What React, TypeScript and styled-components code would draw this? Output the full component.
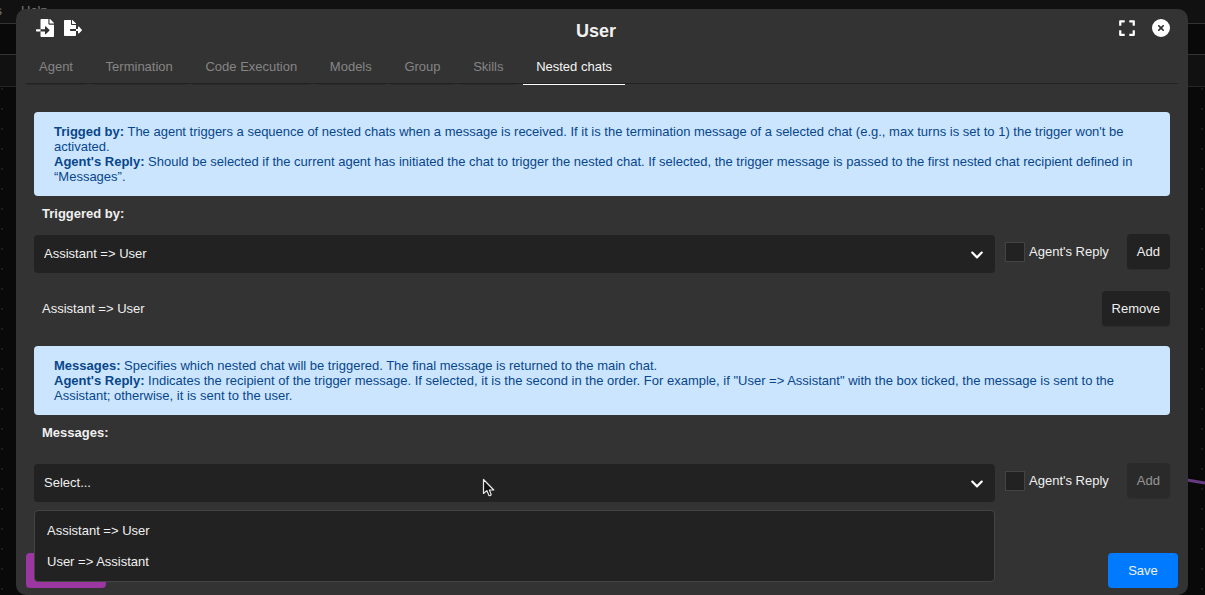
import React, { Fragment, useState } from "react";
import styled, { createGlobalStyle } from "styled-components";
import { FaChevronDown, FaExpand, FaFileExport, FaFileImport } from "react-icons/fa";
import { FaCircleXmark } from "react-icons/fa6";

const GlobalStyle = createGlobalStyle`
  *, *::before, *::after { box-sizing: border-box; }
  body {
    margin: 0;
    background: #090909;
    color: #f0f0f0;
    font: 13px/15px "Liberation Sans", Arial, sans-serif;
  }
  button, input, select { font: inherit; color: inherit; margin: 0; }
`;

const Workspace = styled.div`
  position: relative;
  display: flex;
  flex-direction: column;
  min-height: 100vh;
  overflow: hidden;
`;

const MenuBar = styled.nav`
  display: flex;
  gap: 19px;
  height: 24px;
  padding-top: 3px;
  background: #111;
  border-bottom: 1px solid #333;
  color: #777;
`;

const MenuItem = styled.span<{ $clipped?: boolean }>`
  display: flex;
  justify-content: flex-end;
  width: ${(p) => (p.$clipped ? "2px" : "auto")};
`;

const TabStrip = styled.div`
  height: 31px;
  background: #090909;
  border-bottom: 1px solid #333;
`;

const ToolStrip = styled.div`
  height: 32px;
  background: #111;
  border-bottom: 1px solid #262626;
`;

const Canvas = styled.div`
  flex: 1;
  display: flex;
  justify-content: flex-end;
  background: radial-gradient(circle at 2px 2px, #1d1d1d 1px, transparent 1px) 0 0 / 20px 20px;
`;

const Edge = styled.svg`
  width: 30px;
  height: 410px;
`;

const Overlay = styled.div`
  position: absolute;
  inset: 0;
  display: flex;
  padding: 9px 17px 0 16px;
`;

const Dialog = styled.section`
  flex: 1;
  display: flex;
  flex-direction: column;
  min-width: 0;
  background: #333;
  border-radius: 10px;
`;

const Header = styled.header`
  display: flex;
  align-items: flex-start;
  padding: 10px 18px 0 20px;
`;

const IconGroup = styled.div<{ $gap: number; $inset?: number }>`
  display: flex;
  gap: ${(p) => p.$gap}px;
  padding-left: ${(p) => p.$inset ?? 0}px;
`;

const IconButton = styled.button`
  display: flex;
  padding: 0;
  border: 0;
  background: none;
  color: #fff;
  cursor: pointer;
`;

const Title = styled.h2`
  flex: 1;
  margin: 2px 0 0;
  font-size: 18px;
  line-height: 20px;
  text-align: center;
`;

const Tabs = styled.div`
  height: 43px;
  margin: 0 10px;
  border-bottom: 1px solid #222;
  white-space: nowrap;
`;

const Tab = styled.button<{ $active: boolean }>`
  height: 44px;
  margin-right: 3px;
  padding: 8px 13px 0;
  vertical-align: top;
  border: 0;
  border-bottom: 1px solid ${(p) => (p.$active ? "#fff" : "#2b2b2b")};
  background: none;
  color: ${(p) => (p.$active ? "#f4f4f4" : "#858585")};
  cursor: pointer;
`;

const Body = styled.div`
  flex: 1;
  padding: 28px 18px 0;
`;

const Notice = styled.div`
  padding: 12px 20px;
  border-radius: 4px;
  background: #cce5ff;
  color: #074789;
`;

const Section = styled.section`
  margin-bottom: 20px;
`;

const FieldLabel = styled.label<{ $space: number }>`
  display: block;
  padding: 10px 8px 0;
  height: ${(p) => p.$space}px;
  font-weight: bold;
`;

const FieldRow = styled.div`
  display: flex;
  align-items: flex-start;
  gap: 10px;
`;

const SelectBox = styled.div`
  position: relative;
  flex: 1;
  min-width: 0;
  padding-top: 1px;
`;

const Select = styled.select`
  appearance: none;
  display: block;
  width: 100%;
  height: 38px;
  padding: 0 40px 2px 10px;
  border: 0;
  border-radius: 4px;
  background: #222;
  outline: none;
`;

const Chevron = styled(FaChevronDown)`
  position: absolute;
  right: 11px;
  top: 14px;
  pointer-events: none;
  color: #fff;
`;

const Menu = styled.ul`
  position: absolute;
  top: 47px;
  left: 0;
  right: 0;
  z-index: 2;
  margin: 0;
  padding: 4px 0;
  list-style: none;
  background: #222;
  border: 1px solid #444;
  border-radius: 4px;
`;

const Option = styled.li`
  padding: 8px 12px;
  cursor: pointer;
`;

const CheckLabel = styled.label`
  display: flex;
  align-items: center;
  gap: 4px;
  height: 35px;
  margin-right: 8px;
`;

const Checkbox = styled.input`
  appearance: none;
  width: 20px;
  height: 20px;
  border: 1px solid #444;
  background: #222;
  &:checked { background: #007bff; }
`;

const Button = styled.button`
  height: 35px;
  padding: 0 10px;
  border: 0;
  border-radius: 4px;
  background: #222;
  box-shadow: 0 1px 1px rgba(0, 0, 0, 0.15);
  cursor: pointer;
  &:disabled { opacity: 0.5; cursor: default; }
`;

const FooterButton = styled(Button)<{ $color: string; $width: number }>`
  width: ${(p) => p.$width}px;
  background: ${(p) => p.$color};
  box-shadow: none;
`;

const ChatRow = styled.div`
  display: flex;
  align-items: center;
  justify-content: space-between;
  margin-top: 18px;
  padding-left: 8px;
`;

const Footer = styled.footer`
  display: flex;
  justify-content: space-between;
  padding: 7px 10px;
`;

const Pointer = styled.svg`
  position: absolute;
  left: 448px;
  top: 15px;
  z-index: 3;
  pointer-events: none;
`;

const tabs = ["Agent", "Termination", "Code Execution", "Models", "Group", "Skills", "Nested chats"];
const chats = ["Assistant => User", "User => Assistant"];

export default function App() {
  const [activeTab, setActiveTab] = useState("Nested chats");
  const [trigger, setTrigger] = useState(chats[0]);
  const [message, setMessage] = useState("");
  const [menuOpen, setMenuOpen] = useState(true);

  return (
    <Workspace>
      <GlobalStyle />
      <MenuBar>
        <MenuItem $clipped>s</MenuItem>
        <MenuItem>Help</MenuItem>
      </MenuBar>
      <TabStrip />
      <ToolStrip />
      <Canvas>
        <Edge viewBox="0 0 30 410">
          <path d="M0 391 L30 396" stroke="#663b84" strokeWidth="3" fill="none" />
        </Edge>
      </Canvas>
      <Overlay>
        <Dialog role="dialog" aria-labelledby="dialog-title">
          <Header>
            <IconGroup $gap={10}>
              <IconButton aria-label="Import"><FaFileImport size={18} /></IconButton>
              <IconButton aria-label="Export"><FaFileExport size={18} /></IconButton>
            </IconGroup>
            <Title id="dialog-title">User</Title>
            <IconGroup $gap={16} $inset={8}>
              <IconButton aria-label="Full screen"><FaExpand size={18} /></IconButton>
              <IconButton aria-label="Close"><FaCircleXmark size={18} /></IconButton>
            </IconGroup>
          </Header>
          <Tabs role="tablist">
            {tabs.map((name) => (
              <Fragment key={name}>
                <Tab
                  role="tab"
                  aria-selected={name === activeTab}
                  $active={name === activeTab}
                  onClick={() => setActiveTab(name)}
                >
                  {name}
                </Tab>{" "}
              </Fragment>
            ))}
          </Tabs>
          <Body>
            <Section>
              <Notice>
                <strong>Trigged by:</strong> The agent triggers a sequence of nested chats when a
                message is received. If it is the termination message of a selected chat (e.g., max
                turns is set to 1) the trigger won't be activated.
                <br />
                <strong>Agent's Reply:</strong> Should be selected if the current agent has initiated
                the chat to trigger the nested chat. If selected, the trigger message is passed to
                the first nested chat recipient defined in “Messages”.
              </Notice>
              <FieldLabel htmlFor="trigger" $space={38}>Triggered by:</FieldLabel>
              <FieldRow>
                <SelectBox>
                  <Select id="trigger" value={trigger} onChange={(e) => setTrigger(e.target.value)}>
                    {chats.map((c) => <option key={c}>{c}</option>)}
                  </Select>
                  <Chevron size={14} />
                </SelectBox>
                <CheckLabel><Checkbox type="checkbox" />Agent's Reply</CheckLabel>
                <Button>Add</Button>
              </FieldRow>
              <ChatRow>
                <span>{chats[0]}</span>
                <Button>Remove</Button>
              </ChatRow>
            </Section>
            <Section>
              <Notice>
                <strong>Messages:</strong> Specifies which nested chat will be triggered. The final
                message is returned to the main chat.
                <br />
                <strong>Agent's Reply:</strong> Indicates the recipient of the trigger message. If
                selected, it is the second in the order. For example, if "User =&gt; Assistant" with
                the box ticked, the message is sent to the Assistant; otherwise, it is sent to the
                user.
              </Notice>
              <FieldLabel htmlFor="message" $space={48}>Messages:</FieldLabel>
              <FieldRow>
                <SelectBox>
                  <Select id="message" value={message} onChange={(e) => setMessage(e.target.value)}>
                    <option value="">Select...</option>
                    {chats.map((c) => <option key={c}>{c}</option>)}
                  </Select>
                  <Chevron size={14} />
                  {menuOpen && (
                    <Menu role="listbox" aria-label="Messages">
                      {chats.map((c) => (
                        <Option
                          key={c}
                          role="option"
                          aria-selected={c === message}
                          onClick={() => {
                            setMessage(c);
                            setMenuOpen(false);
                          }}
                        >
                          {c}
                        </Option>
                      ))}
                    </Menu>
                  )}
                  <Pointer width="14" height="20" viewBox="0 0 14 20" aria-hidden="true">
                    <path
                      d="M1.5 1.5 V15.5 L4.8 12.6 L7 17.4 Q8.2 18 9.2 16.6 L7.4 12 H11.8 Z"
                      fill="#111"
                      stroke="#e8e8e8"
                      strokeWidth="1.2"
                      strokeLinejoin="round"
                    />
                  </Pointer>
                </SelectBox>
                <CheckLabel><Checkbox type="checkbox" />Agent's Reply</CheckLabel>
                <Button disabled={!message}>Add</Button>
              </FieldRow>
            </Section>
          </Body>
          <Footer>
            <FooterButton $color="#9c36a0" $width={80} aria-label="Cancel" />
            <FooterButton $color="#007bff" $width={70}>Save</FooterButton>
          </Footer>
        </Dialog>
      </Overlay>
    </Workspace>
  );
}
